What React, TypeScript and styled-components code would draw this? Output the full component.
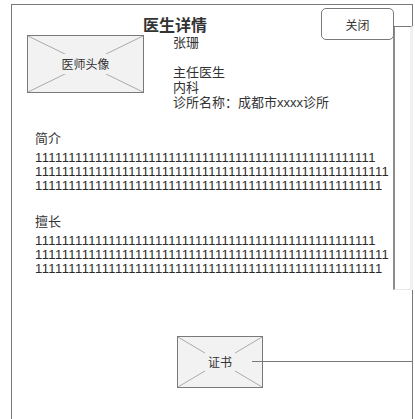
import React from "react";
import styled, { createGlobalStyle } from "styled-components";

const GlobalStyle = createGlobalStyle`
  html, body {
    margin: 0;
    padding: 0;
    background: #ffffff;
    overflow: hidden;
  }
  body {
    font-family: "Liberation Sans", "Noto Sans CJK SC", sans-serif;
    color: #333333;
  }
`;

const Frame = styled.div`
  position: relative;
  box-sizing: border-box;
  margin: 4px 0 0 11px;
  width: 402px;
  height: calc(100vh - 4px);
  border: 1px solid #797979;
  border-bottom: none;
  background: #ffffff;
`;

const ScrollTrack = styled.div`
  position: absolute;
  top: 21px;
  right: -1px;
  box-sizing: border-box;
  width: 20px;
  height: 264px;
  background: #ffffff;
  border-top: 1px solid #797979;
  border-left: 2px solid #8c8c8c;
  border-bottom: 1px solid #e8e8e8;
  border-right: 3px solid #f0f0f0;
`;

const Header = styled.div`
  position: relative;
  z-index: 1;
  display: flex;
  align-items: center;
  height: 32px;
  margin-top: 3px;
  padding: 0 18px 0 131px;
`;

const Title = styled.h1`
  margin: 0;
  font-family: "Noto Sans CJK SC", sans-serif;
  font-size: 16px;
  line-height: 20px;
  font-weight: 700;
  color: #333333;
`;

const CloseButton = styled.button`
  margin-left: auto;
  box-sizing: border-box;
  width: 73px;
  height: 32px;
  padding: 0;
  border: 1px solid #797979;
  border-radius: 5px;
  background: #ffffff;
  font-family: "Noto Sans CJK SC", sans-serif;
  font-size: 12px;
  color: #333333;
  cursor: pointer;
`;

const Profile = styled.div`
  display: flex;
  align-items: flex-start;
  margin-top: -5px;
  padding-left: 15px;
`;

const Placeholder = styled.div<{ $w: number; $h: number }>`
  position: relative;
  box-sizing: border-box;
  flex: none;
  width: ${(p) => p.$w}px;
  height: ${(p) => p.$h}px;
  border: 1px solid #797979;
  background: #f2f2f2;
  display: flex;
  align-items: center;
  justify-content: center;
`;

const Cross = styled.svg`
  position: absolute;
  inset: 0;
  width: 100%;
  height: 100%;
`;

const PlaceholderLabel = styled.span`
  position: relative;
  padding: 0 3px;
  background: #f2f2f2;
  font-family: "Noto Sans CJK SC", sans-serif;
  font-size: 12px;
  line-height: 20px;
  color: #333333;
`;

const Info = styled.div`
  margin-left: 29px;
  font-family: "Liberation Sans", "Noto Sans CJK SC", sans-serif;
  font-size: 13px;
  line-height: 15px;
  color: #333333;
`;

const InfoLine = styled.div`
  min-height: 15px;
  white-space: nowrap;
`;

const Section = styled.section<{ $top: number }>`
  margin-top: ${(p) => p.$top}px;
  padding-left: 23px;
`;

const SectionLabel = styled.div`
  font-family: "Noto Sans CJK SC", sans-serif;
  font-size: 13px;
  line-height: 15px;
  color: #333333;
  margin-bottom: 6px;
`;

const Digits = styled.div`
  font-family: "Liberation Sans", sans-serif;
  font-size: 13px;
  line-height: 14px;
  letter-spacing: 0.4px;
  color: #2a2a2a;
  white-space: nowrap;
`;

const CertRow = styled.div`
  position: relative;
  margin-top: 60px;
  padding-left: 165px;
`;

const Connector = styled.div`
  position: absolute;
  top: 25px;
  left: 240px;
  right: 0;
  height: 1px;
  background: #797979;
`;

const Box: React.FC<{ w: number; h: number; label: string }> = ({ w, h, label }) => (
  <Placeholder $w={w} $h={h}>
    <Cross viewBox={`0 0 ${w - 2} ${h - 2}`} preserveAspectRatio="none">
      <line x1="0" y1="0" x2={w - 2} y2={h - 2} stroke="#aaaaaa" strokeWidth="1" />
      <line x1={w - 2} y1="0" x2="0" y2={h - 2} stroke="#aaaaaa" strokeWidth="1" />
    </Cross>
    <PlaceholderLabel>{label}</PlaceholderLabel>
  </Placeholder>
);

const ones = (n: number) => "1".repeat(n);
const rows = [51, 53, 52];

export default function App() {
  return (
    <>
      <GlobalStyle />
      <Frame>
        <ScrollTrack />
        <Header>
          <Title>医生详情</Title>
          <CloseButton>关闭</CloseButton>
        </Header>
        <Profile>
          <Box w={117} h={58} label="医师头像" />
          <Info>
            <InfoLine>张珊</InfoLine>
            <InfoLine />
            <InfoLine>主任医生</InfoLine>
            <InfoLine>内科</InfoLine>
            <InfoLine>诊所名称：成都市xxxx诊所</InfoLine>
          </Info>
        </Profile>
        <Section $top={20}>
          <SectionLabel>简介</SectionLabel>
          {rows.map((n, i) => (
            <Digits key={i}>{ones(n)}</Digits>
          ))}
        </Section>
        <Section $top={20}>
          <SectionLabel>擅长</SectionLabel>
          {rows.map((n, i) => (
            <Digits key={i}>{ones(n)}</Digits>
          ))}
        </Section>
        <CertRow>
          <Box w={86} h={52} label="证书" />
          <Connector />
        </CertRow>
      </Frame>
    </>
  );
}
